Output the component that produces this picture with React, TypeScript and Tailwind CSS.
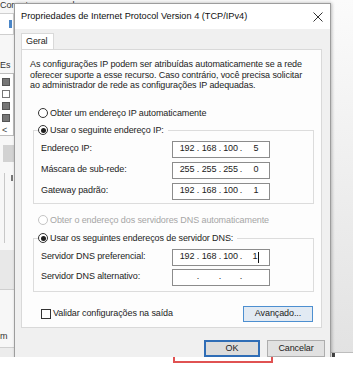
import type { ReactNode } from 'react';

const font = { fontFamily: '"Liberation Sans", Arial, sans-serif' };

function Radio({ checked, disabled, children }: { checked?: boolean; disabled?: boolean; children: ReactNode }) {
  return (
    <div className={`flex items-center gap-[2px] ${disabled ? 'text-[#a6a6a6]' : 'text-[#1c1c1c]'}`}>
      <span
        className={`flex h-[10px] w-[10px] items-center justify-center rounded-full border bg-white ${
          disabled ? 'border-[#c4c4c4]' : 'border-[#333]'
        }`}
      >
        {checked && <span className="h-[5px] w-[5px] rounded-full bg-[#1f1f1f]" />}
      </span>
      <span className="leading-[11px]">{children}</span>
    </div>
  );
}

function IpBox({ parts, cursor }: { parts: string[]; cursor?: boolean }) {
  return (
    <div className="flex h-[17px] w-[98px] items-center border border-[#8c8c8c] bg-white pl-[5px] text-[#222]">
      <span className="w-[18px] text-center">{parts[0]}</span>
      <span className="w-[4px] text-center">.</span>
      <span className="w-[18px] text-center">{parts[1]}</span>
      <span className="w-[4px] text-center">.</span>
      <span className="w-[17px] text-center">{parts[2]}</span>
      <span className="w-[4px] text-center">.</span>
      <span className="flex flex-1 items-center justify-center">
        {parts[3]}
        {cursor && <span className="ml-[1px] h-[11px] w-px bg-[#111]" />}
      </span>
    </div>
  );
}

function Row({ label, children }: { label: string; children: ReactNode }) {
  return (
    <div className="flex items-center">
      <span className="w-[138px] pl-[7px] text-[#1c1c1c]">{label}</span>
      {children}
    </div>
  );
}

function Group({ legend, className, children }: { legend: ReactNode; className: string; children: ReactNode }) {
  return (
    <fieldset className={`ml-[11px] mr-[7px] border border-[#dcdcdc] ${className}`}>
      <legend className="ml-[4px] pr-[4px]">{legend}</legend>
      {children}
    </fieldset>
  );
}

function Cursor() {
  return (
    <svg className="absolute left-[257px] top-[321px]" width="11" height="17" viewBox="0 0 11 17">
      <path d="M1 1 L1 13 L4 10.5 L6.5 15.5 L8.5 14.5 L6 9.5 L10 9.5 Z" fill="#fff" stroke="#222" strokeWidth="1" strokeLinejoin="round" />
    </svg>
  );
}

export default function App() {
  return (
    <div className="relative h-[365px] w-[353px] overflow-hidden bg-white text-[9px] tracking-[-0.1px]" style={font}>
      <div className="flex h-[357px] overflow-hidden bg-[#f7f7f7]">
        {/* background window, left edge */}
        <div className="relative z-0 flex w-[14px] shrink-0 flex-col">
          <div className="mt-[1px] whitespace-nowrap leading-[9px] text-[#333]">Conectar-se usando:</div>
          <div className="mt-[3px] flex h-[22px] items-center justify-end border-y border-r border-[#cfcfcf] bg-white pr-[1px]">
            <span className="h-[8px] w-[3px] bg-[#4a86c8]" />
          </div>
          <div className="mt-[25px] leading-[10px] text-[#333]">Es</div>
          <div className="mt-[3px] flex h-[63px] flex-col gap-[4px] border-y border-r border-[#bdbdbd] bg-white pl-[2px] pt-[4px]">
            <span className="h-[8px] w-[8px] border border-[#555] bg-[#777]" />
            <span className="h-[8px] w-[8px] border border-[#777]" />
            <span className="h-[8px] w-[8px] border border-[#555] bg-[#777]" />
            <span className="h-[8px] w-[8px] border border-[#555] bg-[#777]" />
            <span className="leading-[8px] text-[#444]">&lt;</span>
          </div>
          <div className="ml-[3px] mt-[9px] h-[17px] bg-[#d2d2d2]" />
          <div className="ml-[4px] mt-[11px] h-[70px] border-l border-[#c8c8c8] pl-[6px] pt-[2px]">
            <span className="block h-[6px] w-[2px] bg-[#777]" />
          </div>
          <div className="mt-[7px] h-[40px] border-b border-[#cfcfcf] bg-[#e8e8e8]" />
          <div className="flex h-[58px] items-end border-b border-[#cfcfcf] pb-[6px] leading-[9px] text-[#333]">m</div>
          <div className="flex-1 bg-[#ececec]" />
        </div>

        {/* dialog */}
        <div className="relative z-10 mt-[3px] flex h-[360px] w-[317px] shrink-0 flex-col border border-[#9d9d9d] bg-[#f0f0f0] shadow-[1px_0_3px_rgba(0,0,0,0.25)]">
          <div className="flex h-[25px] items-center justify-between bg-white pl-[6px] pr-[7px]">
            <span className="text-[9.2px] tracking-normal text-[#111]">Propriedades de Internet Protocol Version 4 (TCP/IPv4)</span>
            <svg width="10" height="10" viewBox="0 0 10 10">
              <path d="M0.5 0.5 L9.5 9.5 M9.5 0.5 L0.5 9.5" stroke="#333" strokeWidth="1" />
            </svg>
          </div>

          <div className="ml-[6px] mr-[8px] mt-[4px] flex flex-col">
            <div className="-mb-px flex h-[17px] w-[33px] items-center border-x border-t border-[#d9d9d9] bg-white pl-[4px] text-[#1c1c1c]">
              Geral
            </div>
            <div className="flex h-[279px] flex-col border border-[#d9d9d9] bg-[#fdfdfd]">
              <p className="whitespace-nowrap pl-[8px] pt-[9px] leading-[10.5px] text-[#1c1c1c]">
                As configurações IP podem ser atribuídas automaticamente se a rede
                <br />
                oferecer suporte a esse recurso. Caso contrário, você precisa solicitar
                <br />
                ao administrador de rede as configurações IP adequadas.
              </p>

              <div className="mt-[17px] pl-[16px]">
                <Radio>Obter um endereço IP automaticamente</Radio>
              </div>

              <Group className="mt-[6px] pb-[3px] pt-[5px]" legend={<Radio checked>Usar o seguinte endereço IP:</Radio>}>
                <div className="flex flex-col gap-[4px]">
                  <Row label="Endereço IP:">
                    <IpBox parts={['192', '168', '100', '5']} />
                  </Row>
                  <Row label="Máscara de sub-rede:">
                    <IpBox parts={['255', '255', '255', '0']} />
                  </Row>
                  <Row label="Gateway padrão:">
                    <IpBox parts={['192', '168', '100', '1']} />
                  </Row>
                </div>
              </Group>

              <div className="mt-[11px] pl-[16px]">
                <Radio disabled>Obter o endereço dos servidores DNS automaticamente</Radio>
              </div>

              <Group className="mt-[7px] pb-[5px] pt-[5px]" legend={<Radio checked>Usar os seguintes endereços de servidor DNS:</Radio>}>
                <div className="flex flex-col gap-[3px]">
                  <Row label="Servidor DNS preferencial:">
                    <IpBox parts={['192', '168', '100', '1']} cursor />
                  </Row>
                  <Row label="Servidor DNS alternativo:">
                    <IpBox parts={['', '', '', '']} />
                  </Row>
                </div>
              </Group>

              <div className="mt-[14px] flex items-center justify-between pl-[19px] pr-[8px]">
                <div className="flex items-center gap-[2px] text-[#1c1c1c]">
                  <span className="h-[10px] w-[10px] border border-[#333] bg-white" />
                  <span>Validar configurações na saída</span>
                </div>
                <div className="flex h-[16px] w-[70px] items-center justify-center border border-[#4d8fd0] bg-[#e2eaf3] text-[#1c1c1c]">
                  Avançado...
                </div>
              </div>
            </div>
          </div>

          <div className="mt-[12px] flex justify-end gap-[7px] pr-[5px]">
            <div className="flex h-[17px] w-[56px] items-center justify-center border-2 border-[#2f6db6] bg-[#dcdcdc] text-[#1c1c1c]">
              OK
            </div>
            <div className="flex h-[17px] w-[58px] items-center justify-center border border-[#adadad] bg-[#e1e1e1] text-[#1c1c1c]">
              Cancelar
            </div>
          </div>
        </div>

        {/* background window, right edge */}
        <div className="flex flex-1 flex-col bg-gradient-to-b from-[#fbfbfb] to-[#e2e2e2]">
          <div className="flex-1" />
          <div className="flex h-[5px] border-t border-[#bdbdbd] bg-white">
            <span className="ml-[1px] h-[4px] w-[3px] bg-[#444]" />
          </div>
        </div>
      </div>

      {/* highlight annotation */}
      <div className="absolute left-[173px] top-[330px] h-[33px] w-[100px] border-2 border-[#e05252]" />
      <Cursor />
    </div>
  );
}
